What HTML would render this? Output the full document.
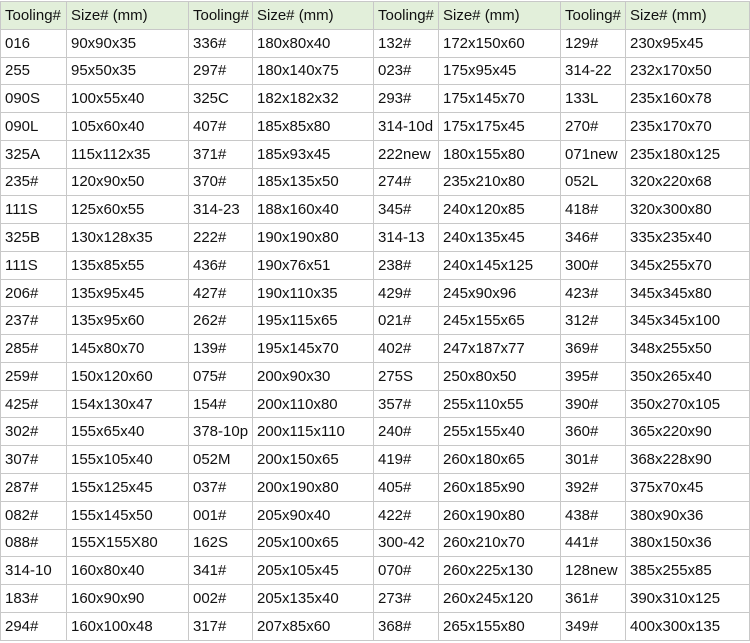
<!DOCTYPE html>
<html><head><meta charset="utf-8"><style>
body{margin:0;background:#fff;width:750px;height:643px;overflow:hidden;font-family:"Liberation Sans",Arial,sans-serif;}
table{position:absolute;left:0;top:1px;border-collapse:collapse;table-layout:fixed;font-size:15px;color:#111;}
td{border:1px solid #c8c8c8;height:27.78px;padding:0 0 0 4px;white-space:nowrap;overflow:hidden;box-sizing:border-box;}
tr.h td{background:#e2efda;}
</style></head><body>
<table>
<colgroup><col style="width:66px"><col style="width:122px"><col style="width:64px"><col style="width:121px"><col style="width:65px"><col style="width:122px"><col style="width:65px"><col style="width:124px"></colgroup>
<tr class="h"><td>Tooling#</td><td>Size# (mm)</td><td>Tooling#</td><td>Size# (mm)</td><td>Tooling#</td><td>Size# (mm)</td><td>Tooling#</td><td>Size# (mm)</td></tr>
<tr><td>016</td><td>90x90x35</td><td>336#</td><td>180x80x40</td><td>132#</td><td>172x150x60</td><td>129#</td><td>230x95x45</td></tr>
<tr><td>255</td><td>95x50x35</td><td>297#</td><td>180x140x75</td><td>023#</td><td>175x95x45</td><td>314-22</td><td>232x170x50</td></tr>
<tr><td>090S</td><td>100x55x40</td><td>325C</td><td>182x182x32</td><td>293#</td><td>175x145x70</td><td>133L</td><td>235x160x78</td></tr>
<tr><td>090L</td><td>105x60x40</td><td>407#</td><td>185x85x80</td><td>314-10d</td><td>175x175x45</td><td>270#</td><td>235x170x70</td></tr>
<tr><td>325A</td><td>115x112x35</td><td>371#</td><td>185x93x45</td><td>222new</td><td>180x155x80</td><td>071new</td><td>235x180x125</td></tr>
<tr><td>235#</td><td>120x90x50</td><td>370#</td><td>185x135x50</td><td>274#</td><td>235x210x80</td><td>052L</td><td>320x220x68</td></tr>
<tr><td>111S</td><td>125x60x55</td><td>314-23</td><td>188x160x40</td><td>345#</td><td>240x120x85</td><td>418#</td><td>320x300x80</td></tr>
<tr><td>325B</td><td>130x128x35</td><td>222#</td><td>190x190x80</td><td>314-13</td><td>240x135x45</td><td>346#</td><td>335x235x40</td></tr>
<tr><td>111S</td><td>135x85x55</td><td>436#</td><td>190x76x51</td><td>238#</td><td>240x145x125</td><td>300#</td><td>345x255x70</td></tr>
<tr><td>206#</td><td>135x95x45</td><td>427#</td><td>190x110x35</td><td>429#</td><td>245x90x96</td><td>423#</td><td>345x345x80</td></tr>
<tr><td>237#</td><td>135x95x60</td><td>262#</td><td>195x115x65</td><td>021#</td><td>245x155x65</td><td>312#</td><td>345x345x100</td></tr>
<tr><td>285#</td><td>145x80x70</td><td>139#</td><td>195x145x70</td><td>402#</td><td>247x187x77</td><td>369#</td><td>348x255x50</td></tr>
<tr><td>259#</td><td>150x120x60</td><td>075#</td><td>200x90x30</td><td>275S</td><td>250x80x50</td><td>395#</td><td>350x265x40</td></tr>
<tr><td>425#</td><td>154x130x47</td><td>154#</td><td>200x110x80</td><td>357#</td><td>255x110x55</td><td>390#</td><td>350x270x105</td></tr>
<tr><td>302#</td><td>155x65x40</td><td>378-10p</td><td>200x115x110</td><td>240#</td><td>255x155x40</td><td>360#</td><td>365x220x90</td></tr>
<tr><td>307#</td><td>155x105x40</td><td>052M</td><td>200x150x65</td><td>419#</td><td>260x180x65</td><td>301#</td><td>368x228x90</td></tr>
<tr><td>287#</td><td>155x125x45</td><td>037#</td><td>200x190x80</td><td>405#</td><td>260x185x90</td><td>392#</td><td>375x70x45</td></tr>
<tr><td>082#</td><td>155x145x50</td><td>001#</td><td>205x90x40</td><td>422#</td><td>260x190x80</td><td>438#</td><td>380x90x36</td></tr>
<tr><td>088#</td><td>155X155X80</td><td>162S</td><td>205x100x65</td><td>300-42</td><td>260x210x70</td><td>441#</td><td>380x150x36</td></tr>
<tr><td>314-10</td><td>160x80x40</td><td>341#</td><td>205x105x45</td><td>070#</td><td>260x225x130</td><td>128new</td><td>385x255x85</td></tr>
<tr><td>183#</td><td>160x90x90</td><td>002#</td><td>205x135x40</td><td>273#</td><td>260x245x120</td><td>361#</td><td>390x310x125</td></tr>
<tr><td>294#</td><td>160x100x48</td><td>317#</td><td>207x85x60</td><td>368#</td><td>265x155x80</td><td>349#</td><td>400x300x135</td></tr>
</table>
</body></html>
